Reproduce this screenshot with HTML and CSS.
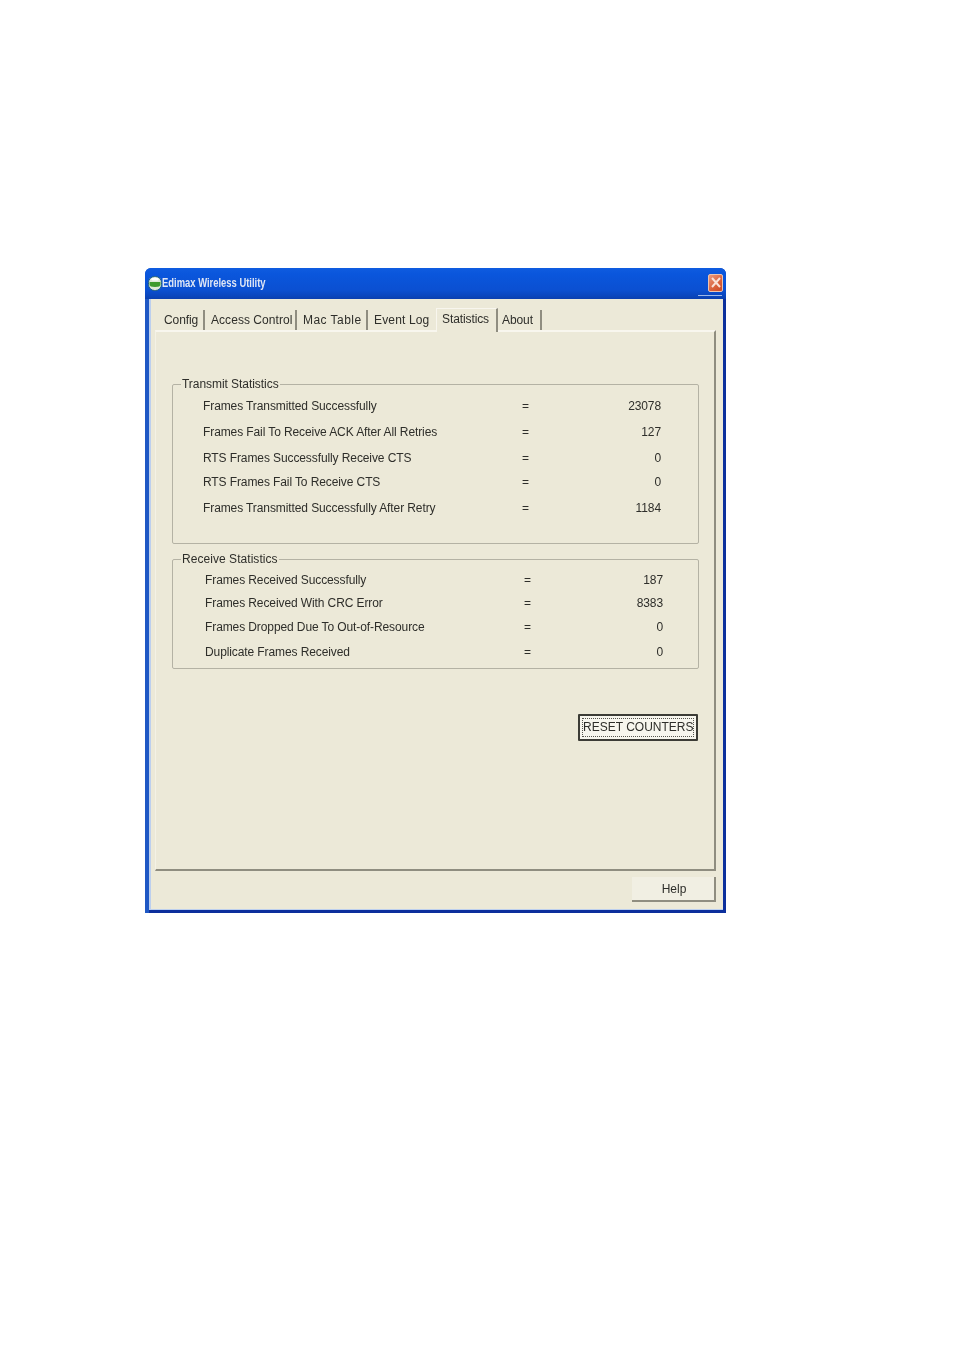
FILE: index.html
```html
<!DOCTYPE html>
<html lang="en">
<head>
  <meta charset="UTF-8">
  <title>Edimax Wireless Utility</title>
  <link rel="stylesheet" href="styles.css">
</head>
<body>

<div class="window">
  <div class="titlebar">
    <svg class="app-icon" width="14" height="15" viewBox="0 0 14 15">
      <rect x="0.5" y="0.5" width="13" height="14" rx="6" fill="#dfe8d8" stroke="#1f5f80"/>
      <path d="M1.5 6 H12.5 V8.5 Q12.5 11 7 11 Q1.5 11 1.5 8.5 Z" fill="#3f9a2c"/>
      <rect x="3.5" y="2" width="7" height="2.5" rx="1.2" fill="#ffffff"/>
    </svg>
    <span class="title-text">Edimax Wireless Utility</span>
    <div class="close-btn">
      <svg width="10" height="11" viewBox="0 0 10 11">
        <path d="M1 1 L9 10 M9 1 L1 10" stroke="#f9e2d8" stroke-width="2" fill="none"/>
      </svg>
    </div>
    <div class="close-line"></div>
  </div>

  <div class="client">
    <div class="tabs">
      <div class="tab tab-config">Config</div>
      <div class="tab tab-access">Access Control</div>
      <div class="tab tab-mac">Mac Table</div>
      <div class="tab tab-event">Event Log</div>
      <div class="tab tab-stats active">Statistics</div>
      <div class="tab tab-about">About</div>
    </div>

    <div class="panel">
      <fieldset class="group group-tx">
        <legend>Transmit Statistics</legend>
        <div class="row h26"><span class="label">Frames Transmitted Successfully</span><span class="eq">=</span><span class="value">23078</span></div>
        <div class="row h26"><span class="label">Frames Fail To Receive ACK After All Retries</span><span class="eq">=</span><span class="value">127</span></div>
        <div class="row h26"><span class="label">RTS Frames Successfully Receive CTS</span><span class="eq">=</span><span class="value">0</span></div>
        <div class="row h22"><span class="label">RTS Frames Fail To Receive CTS</span><span class="eq">=</span><span class="value">0</span></div>
        <div class="row h30"><span class="label">Frames Transmitted Successfully After Retry</span><span class="eq">=</span><span class="value">1184</span></div>
      </fieldset>

      <fieldset class="group group-rx">
        <legend>Receive Statistics</legend>
        <div class="row h23"><span class="label">Frames Received Successfully</span><span class="eq">=</span><span class="value">187</span></div>
        <div class="row h24"><span class="label">Frames Received With CRC Error</span><span class="eq">=</span><span class="value">8383</span></div>
        <div class="row h24"><span class="label">Frames Dropped Due To Out-of-Resource</span><span class="eq">=</span><span class="value">0</span></div>
        <div class="row h26"><span class="label">Duplicate Frames Received</span><span class="eq">=</span><span class="value">0</span></div>
      </fieldset>

      <div class="reset-wrap">
        <button class="reset-btn"><span>RESET COUNTERS</span></button>
      </div>
    </div>

    <div class="footer">
      <button class="help-btn">Help</button>
    </div>
  </div>
</div>

</body>
</html>
```

FILE: styles.css
```css
* {
  box-sizing: border-box;
}
body {
  margin: 0;
  background: #fff;
  font-family: "Liberation Sans", Arial, sans-serif;
  font-size: 12px;
  letter-spacing: -0.1px;
  color: #2e2e2a;
}
.window {
  width: 581px;
  height: 645px;
  margin: 268px 0 0 145px;
  display: flex;
  flex-direction: column;
  background: linear-gradient(90deg, #1f58c4 0, #1f58c4 90%, #0c2f9c 100%);
  border-radius: 6px 6px 0 0;
  filter: blur(0.5px);
}

/* title bar */
.titlebar {
  position: relative;
  height: 31px;
  flex: none;
  display: flex;
  align-items: center;
  padding: 0 3px;
  border-radius: 6px 6px 0 0;
  background: linear-gradient(#0f5ce0 0, #0a56dc 20%, #0b50d2 70%, #0a46bd 90%, #0b3fae 100%);
}
.app-icon {
  flex: none;
  margin-top: -1px;
}
.title-text {
  margin-top: -2px;
  color: #dfe6f5;
  font-weight: bold;
  font-size: 12px;
  letter-spacing: 0;
  transform: scaleX(0.785);
  transform-origin: left center;
}
.close-btn {
  width: 15px;
  height: 18px;
  margin-left: auto;
  margin-top: -2px;
  display: flex;
  align-items: center;
  justify-content: center;
  background: linear-gradient(135deg, #e99a7e, #d9603a 60%, #cc4a26);
  border: 1px solid #ecc4b0;
  border-radius: 2px;
}
.close-line {
  position: absolute;
  right: 4px;
  bottom: 3px;
  width: 24px;
  height: 1px;
  background: #9db8e8;
}

/* window body */
.client {
  flex: 1;
  margin: 0 3px 3px 4px;
  padding: 9px 7px 0 4px;
  background: #ece9d8;
  display: flex;
  flex-direction: column;
  border-left: 2px solid #bccfee;
  border-bottom: 1px solid #bccfee;
  box-shadow: 0 3px 0 #0c2f9c;
}
.tabs {
  height: 22px;
  flex: none;
  display: flex;
  align-items: flex-end;
  padding-left: 3px;
}
.tab {
  height: 20px;
  padding: 0 0 0 6px;
  line-height: 20px;
  border-right: 2px solid #8f8d80;
  white-space: nowrap;
}
.tab-config { width: 47px; }
.tab-access { width: 92px; letter-spacing: 0.05px; }
.tab-mac { width: 71px; letter-spacing: 0.45px; }
.tab-event { width: 68px; border-right: none; letter-spacing: 0.15px; }
.tab-about { width: 44px; padding-left: 4px; }
.tab.active {
  width: 62px;
  height: 24px;
  line-height: 20px;
  padding-left: 5px;
  background: #ece9d8;
  border-top: 1px solid #f8f6ee;
  border-left: 1px solid #f8f6ee;
  position: relative;
  z-index: 1;
  margin-bottom: -2px;
}

.panel {
  height: 541px;
  flex: none;
  display: flex;
  flex-direction: column;
  padding: 45px 15px 0 16px;
  border-top: 2px solid #f8f6ee;
  border-left: 1px solid #f4f2e6;
  border-right: 2px solid #8f8d80;
  border-bottom: 2px solid #8f8d80;
}

/* statistics groups */
.group {
  margin: 0;
  padding: 1px 0 0;
  border: 1px solid #b4b2a4;
  border-radius: 2px;
  height: 167px;
  min-width: 0;
}
.group legend {
  margin-left: 8px;
  padding: 0 1px;
  line-height: 15px;
  letter-spacing: -0.05px;
}
.group-tx .row {
  padding: 0 37px 0 30px;
}
.group-rx {
  height: 118px;
  margin-top: 7px;
  padding-top: 1px;
}
.group-rx legend {
  padding-top: 1px;
  letter-spacing: 0.05px;
}
.group-rx .row {
  padding: 0 35px 0 32px;
}
.row {
  display: flex;
  align-items: center;
}
.h22 { height: 22px; }
.h23 { height: 23px; }
.h24 { height: 24px; }
.h26 { height: 26px; }
.h30 { height: 30px; }
.label {
  width: 319px;
  flex: none;
}
.eq {
  width: 8px;
  flex: none;
}
.value {
  flex: 1;
  text-align: right;
}

/* buttons */
.reset-wrap {
  display: flex;
  justify-content: flex-end;
  padding: 45px 1px 0 0;
}
.reset-btn {
  width: 120px;
  height: 27px;
  padding: 2px;
  background: #f7f6ee;
  border: 2px solid #3c3c36;
  border-radius: 1px;
  font-family: inherit;
  font-size: 12px;
  letter-spacing: 0;
  color: #2e2e2a;
}
.reset-btn span {
  display: block;
  height: 100%;
  line-height: 17px;
  border: 1px dotted #55554e;
  white-space: nowrap;
}
.footer {
  flex: 1;
  display: flex;
  justify-content: flex-end;
  padding-top: 6px;
}
.help-btn {
  width: 84px;
  height: 25px;
  padding-left: 8px;
  background: #f1efe3;
  border: none;
  border-right: 2px solid #8f8d80;
  border-bottom: 2px solid #8f8d80;
  font-family: inherit;
  font-size: 12px;
  letter-spacing: 0;
  color: #2e2e2a;
}
```
